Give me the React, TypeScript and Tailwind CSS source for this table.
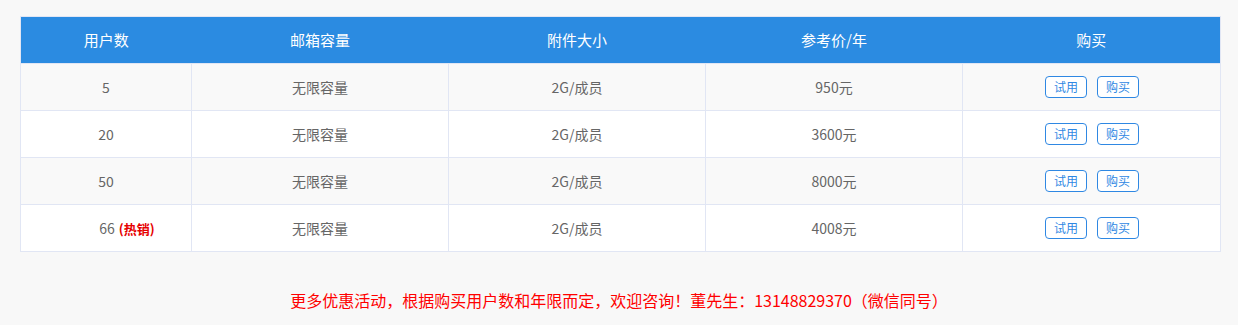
const rows = [
  { users: "5", price: "950元" },
  { users: "20", price: "3600元" },
  { users: "50", price: "8000元" },
  { users: "66", price: "4008元", hot: true },
];

const td = "border border-[#e1e6f4] h-[47px] text-center align-middle p-0";
const btn = "h-[22px] w-[42px] rounded-[4px] border border-[#2f88e3] text-[12px] leading-none text-[#2f88e3] bg-white";

export default function App() {
  return (
    <div className="min-h-[325px] bg-[#f8f8f8] pt-4 font-['Segoe_UI','Noto_Sans_CJK_SC',sans-serif]">
      <table className="ml-5 w-[1200px] border-collapse table-fixed text-[14px] text-[#666]">
        <colgroup>
          <col className="w-[171px]" />
          <col className="w-[257px]" />
          <col className="w-[257px]" />
          <col className="w-[257px]" />
          <col className="w-[258px]" />
        </colgroup>
        <thead>
          <tr className="bg-[#2b8be1] text-[15px] text-white">
            <th className="h-[47px] border-y border-l border-[#e1e6f4] font-normal">用户数</th>
            <th className="border-y border-[#e1e6f4] font-normal">邮箱容量</th>
            <th className="border-y border-[#e1e6f4] font-normal">附件大小</th>
            <th className="border-y border-[#e1e6f4] font-normal">参考价/年</th>
            <th className="border-y border-r border-[#e1e6f4] font-normal">购买</th>
          </tr>
        </thead>
        <tbody>
          {rows.map((r, i) => (
            <tr key={r.users} className={i % 2 === 0 ? "bg-[#f9f9f9]" : "bg-white"}>
              <td className={r.hot ? td + " pl-[42px]" : td}>
                {r.users}
                {r.hot && <span className="ml-1 text-[13px] font-bold text-[#e60000]">(热销)</span>}
              </td>
              <td className={td}>无限容量</td>
              <td className={td}>2G/成员</td>
              <td className={td}>{r.price}</td>
              <td className={td}>
                <div className="flex justify-center gap-[10px] pl-[1px]">
                  <button className={btn}>试用</button>
                  <button className={btn}>购买</button>
                </div>
              </td>
            </tr>
          ))}
        </tbody>
      </table>
      <p className="mt-[36px] text-center text-[16px] text-[#ff0000]">
        更多优惠活动，根据购买用户数和年限而定，欢迎咨询！董先生：13148829370（微信同号）
      </p>
    </div>
  );
}
